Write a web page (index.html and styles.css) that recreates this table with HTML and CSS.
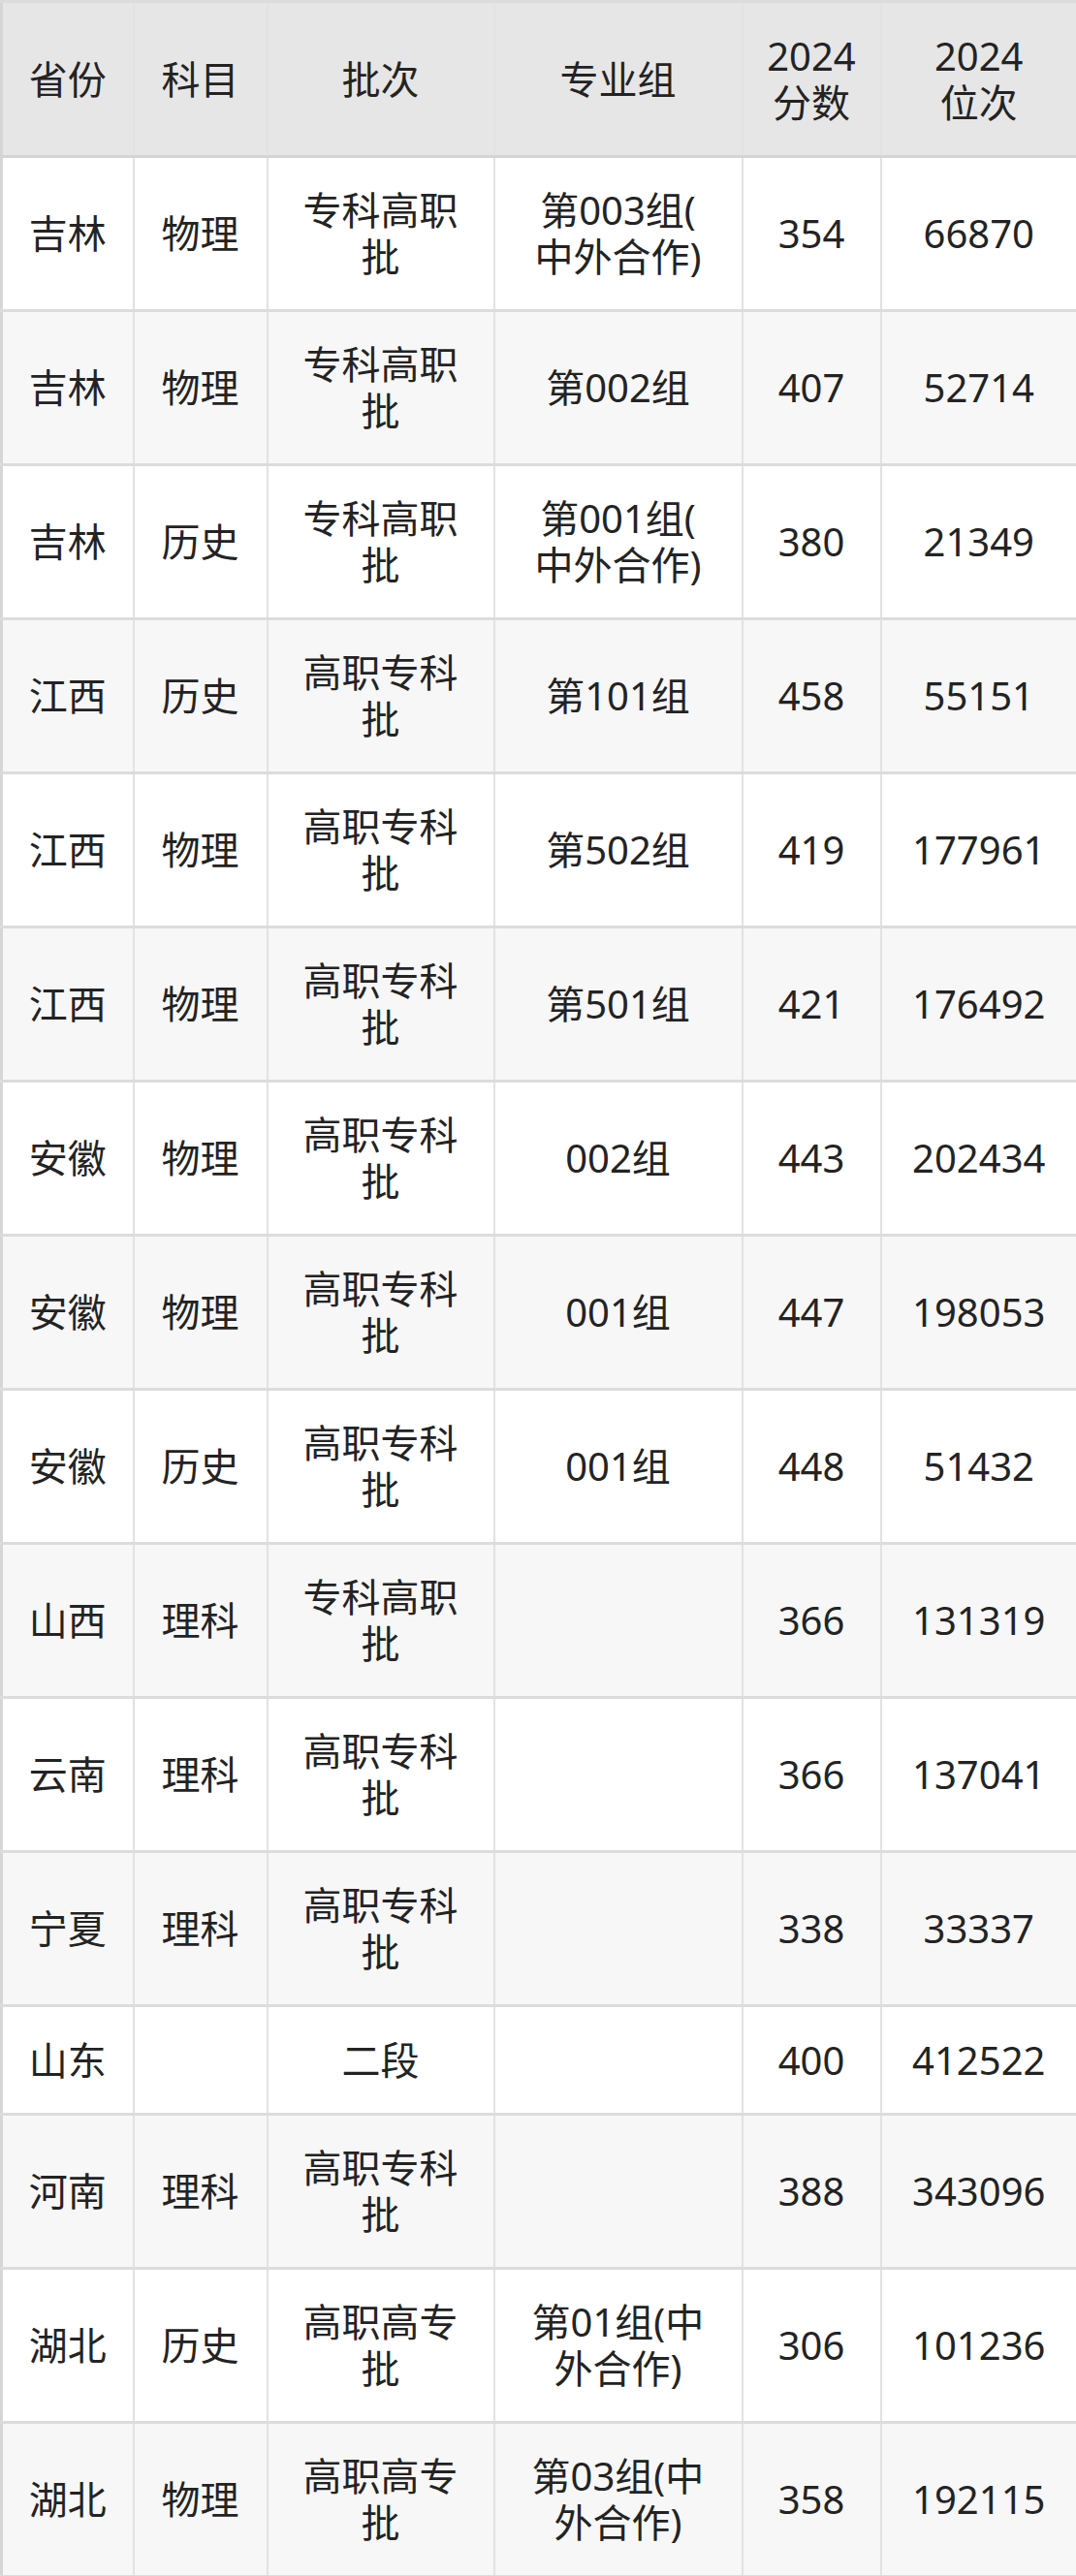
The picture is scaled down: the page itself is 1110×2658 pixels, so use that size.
FILE: index.html
```html
<!DOCTYPE html>
<html lang="zh-CN">
<head>
<meta charset="utf-8">
<title>分数位次</title>
<link rel="stylesheet" href="styles.css">
</head>
<body>
<table class="score-table">
  <colgroup>
    <col class="c1"><col class="c2"><col class="c3"><col class="c4"><col class="c5"><col class="c6">
  </colgroup>
  <thead>
    <tr class="head">
      <th>省份</th><th>科目</th><th>批次</th><th>专业组</th><th>2024分数</th><th>2024位次</th>
    </tr>
  </thead>
  <tbody>
    <tr><td>吉林</td><td>物理</td><td>专科高职批</td><td>第003组(中外合作)</td><td>354</td><td>66870</td></tr>
    <tr><td>吉林</td><td>物理</td><td>专科高职批</td><td>第002组</td><td>407</td><td>52714</td></tr>
    <tr><td>吉林</td><td>历史</td><td>专科高职批</td><td>第001组(中外合作)</td><td>380</td><td>21349</td></tr>
    <tr><td>江西</td><td>历史</td><td>高职专科批</td><td>第101组</td><td>458</td><td>55151</td></tr>
    <tr><td>江西</td><td>物理</td><td>高职专科批</td><td>第502组</td><td>419</td><td>177961</td></tr>
    <tr><td>江西</td><td>物理</td><td>高职专科批</td><td>第501组</td><td>421</td><td>176492</td></tr>
    <tr><td>安徽</td><td>物理</td><td>高职专科批</td><td>002组</td><td>443</td><td>202434</td></tr>
    <tr><td>安徽</td><td>物理</td><td>高职专科批</td><td>001组</td><td>447</td><td>198053</td></tr>
    <tr><td>安徽</td><td>历史</td><td>高职专科批</td><td>001组</td><td>448</td><td>51432</td></tr>
    <tr><td>山西</td><td>理科</td><td>专科高职批</td><td></td><td>366</td><td>131319</td></tr>
    <tr><td>云南</td><td>理科</td><td>高职专科批</td><td></td><td>366</td><td>137041</td></tr>
    <tr><td>宁夏</td><td>理科</td><td>高职专科批</td><td></td><td>338</td><td>33337</td></tr>
    <tr class="short"><td>山东</td><td></td><td>二段</td><td></td><td>400</td><td>412522</td></tr>
    <tr><td>河南</td><td>理科</td><td>高职专科批</td><td></td><td>388</td><td>343096</td></tr>
    <tr><td>湖北</td><td>历史</td><td>高职高专批</td><td>第01组(中外合作)</td><td>306</td><td>101236</td></tr>
    <tr><td>湖北</td><td>物理</td><td>高职高专批</td><td>第03组(中外合作)</td><td>358</td><td>192115</td></tr>
  </tbody>
</table>
</body>
</html>
```

FILE: styles.css
```css
html, body {
  margin: 0;
  padding: 0;
  background: #ffffff;
}

.score-table {
  width: 1110px;
  table-layout: fixed;
  border-collapse: collapse;
  font-family: "Noto Sans", "Noto Sans CJK SC", sans-serif;
  font-size: 40px;
  line-height: 48px;
  color: #232323;
  border: 3px solid #d6d6d6;
}

.c1 { width: 136px; }
.c2 { width: 138px; }
.c3 { width: 234px; }
.c4 { width: 256px; }
.c5 { width: 143px; }
.c6 { width: 203px; }

.score-table th,
.score-table td {
  padding: 0 8px;
  text-align: center;
  vertical-align: middle;
  font-weight: 400;
  white-space: normal;
  border-top: 3px solid #dcdcdc;
  border-bottom: 3px solid #dcdcdc;
  border-left: 2px solid #e2e2e2;
  border-right: 2px solid #e2e2e2;
}

.score-table td:nth-child(3),
.score-table th:nth-child(3) {
  padding: 0 25px;
}

.score-table td:nth-child(4),
.score-table th:nth-child(4) {
  padding: 0 30px;
  line-break: anywhere;
}

.score-table th:nth-child(6) {
  padding: 0 40px;
}

.head {
  height: 160px;
  background: #e6e6e6;
}

.head th {
  border-bottom: 3px solid #d4d4d4;
}

tbody tr {
  height: 159px;
  background: #ffffff;
}

tbody tr:nth-child(even) {
  background: #f7f7f7;
}

tbody tr.short {
  height: 112px;
}
```
